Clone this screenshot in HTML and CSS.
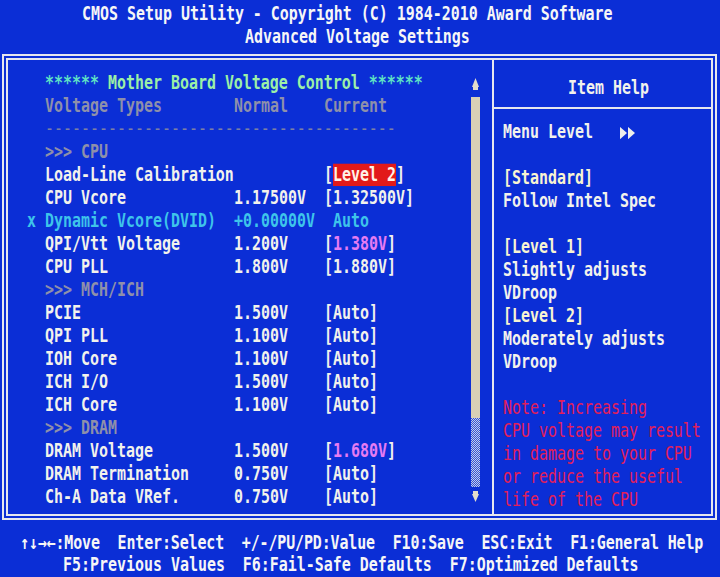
FILE: index.html
```html
<!DOCTYPE html>
<html lang="en">
<head>
<meta charset="utf-8">
<title>CMOS Setup Utility - Advanced Voltage Settings</title>
<link rel="stylesheet" href="styles.css">
</head>
<body>
<div class="screen">
  <header class="title">
    <div class="ln t1">CMOS Setup Utility - Copyright (C) 1984-2010 Award Software</div>
    <div class="ln t2">Advanced Voltage Settings</div>
  </header>

  <main class="frame">
    <section class="menu">
      <div class="rows">
        <div class="ln hdr"><span class="star">******</span> <span class="green">Mother Board Voltage Control</span> <span class="star">******</span></div>
        <div class="ln row muted"><span></span><span>Voltage Types</span><span>Normal</span><span>Current</span></div>
        <div class="ln hdr rule">---------------------------------------</div>
        <div class="ln hdr muted">&gt;&gt;&gt; CPU</div>
        <div class="ln row"><span></span><span>Load-Line Calibration</span><span></span><span>[<span class="sel">Level 2</span>]</span></div>
        <div class="ln row"><span></span><span>CPU Vcore</span><span>1.17500V</span><span>[1.32500V]</span></div>
        <div class="ln row dim"><span>x</span><span>Dynamic Vcore(DVID)</span><span>+0.00000V</span><span> Auto</span></div>
        <div class="ln row"><span></span><span>QPI/Vtt Voltage</span><span>1.200V</span><span>[<span class="pink">1.380V</span>]</span></div>
        <div class="ln row"><span></span><span>CPU PLL</span><span>1.800V</span><span>[1.880V]</span></div>
        <div class="ln hdr muted">&gt;&gt;&gt; MCH/ICH</div>
        <div class="ln row"><span></span><span>PCIE</span><span>1.500V</span><span>[Auto]</span></div>
        <div class="ln row"><span></span><span>QPI PLL</span><span>1.100V</span><span>[Auto]</span></div>
        <div class="ln row"><span></span><span>IOH Core</span><span>1.100V</span><span>[Auto]</span></div>
        <div class="ln row"><span></span><span>ICH I/O</span><span>1.500V</span><span>[Auto]</span></div>
        <div class="ln row"><span></span><span>ICH Core</span><span>1.100V</span><span>[Auto]</span></div>
        <div class="ln hdr muted">&gt;&gt;&gt; DRAM</div>
        <div class="ln row"><span></span><span>DRAM Voltage</span><span>1.500V</span><span>[<span class="pink">1.680V</span>]</span></div>
        <div class="ln row"><span></span><span>DRAM Termination</span><span>0.750V</span><span>[Auto]</span></div>
        <div class="ln row"><span></span><span>Ch-A Data VRef.</span><span>0.750V</span><span>[Auto]</span></div>
      </div>

      <div class="scroll">
        <svg class="arrow up" width="9" height="12" viewBox="0 0 9 12"><polygon points="4.5,0 8,9 1,9"/><rect x="2" y="9" width="5" height="3"/></svg>
        <div class="thumb"></div>
        <div class="dots"></div>
        <svg class="arrow down" width="9" height="11" viewBox="0 0 9 11"><rect x="2" y="0" width="5" height="3"/><polygon points="1,3 8,3 4.5,11"/></svg>
      </div>
    </section>

    <aside class="help">
      <div class="help-head"><div class="ln">Item Help</div></div>
      <div class="help-body">
        <div class="ln">Menu Level   <svg class="fwd" width="17" height="10" viewBox="0 0 17 10"><polygon points="0,0 7,5 0,10"/><polygon points="8,0 15,5 8,10"/></svg></div>
        <div class="ln"> </div>
        <div class="ln opt">[Standard]</div>
        <div class="ln">Follow Intel Spec</div>
        <div class="ln"> </div>
        <div class="ln opt">[Level 1]</div>
        <div class="ln">Slightly adjusts</div>
        <div class="ln">VDroop</div>
        <div class="ln opt">[Level 2]</div>
        <div class="ln">Moderately adjusts</div>
        <div class="ln">VDroop</div>
        <div class="ln"> </div>
        <div class="ln note">Note: Increasing</div>
        <div class="ln note">CPU voltage may result</div>
        <div class="ln note">in damage to your CPU</div>
        <div class="ln note">or reduce the useful</div>
        <div class="ln note">life of the CPU</div>
      </div>
    </aside>
  </main>

  <footer class="keys">
    <div class="ln k1">↑↓→←:Move  Enter:Select  +/-/PU/PD:Value  F10:Save  ESC:Exit  F1:General Help</div>
    <div class="ln k2">F5:Previous Values  F6:Fail-Safe Defaults  F7:Optimized Defaults</div>
  </footer>
</div>
</body>
</html>
```
FILE: styles.css
```css
* {
  box-sizing: border-box;
  margin: 0;
  padding: 0;
}

html,
body {
  background: #0b2ed6;
}

body {
  width: 720px;
  height: 577px;
  overflow: hidden;
  font-family: "DejaVu Sans Mono", "Liberation Mono", monospace;
  font-weight: bold;
  font-size: 14.95px;
  color: #f2f2ec;
}

/* one text-mode line: 23px cell, glyphs stretched tall like the VGA font */
.ln {
  height: 23px;
  line-height: 23px;
  white-space: pre;
  transform: scaleY(1.24);
}

/* ---------- title ---------- */
.title {
  height: 54px;
  padding-top: 3px;
  color: #f6f6f6;
}

.t1 { padding-left: 82px; }
.t2 { padding-left: 245px; }

/* ---------- main double frame ---------- */
.frame {
  margin: 0 3px 0 2px;
  height: 466px;
  border: 6px double #e6e6ee;
  display: grid;
  grid-template-columns: 484px 1fr;
}

.menu {
  display: grid;
  grid-template-columns: 1fr 9px 12px;
}

.rows {
  padding: 12px 0 0 19px;
}

.row {
  display: grid;
  grid-template-columns: 18px 189px 90px auto;
}

.hdr { padding-left: 18px; }

.star { color: #5ee0c4; }
.green { color: #9cf0a6; }
.muted { color: #8e90aa; }
.rule { color: #7a7ea6; font-weight: normal; }
.dim { color: #3ec4ea; }
.pink { color: #e67cf2; }

.sel {
  background: #e21a1a;
  color: #fff2e6;
}

/* ---------- scroll bar ---------- */
.scroll {
  display: flex;
  flex-direction: column;
  align-items: center;
  padding-top: 18px;
}

.arrow { fill: #e2dccc; display: block; }
.up { margin-bottom: 7px; }
.down { margin-top: 4px; }

.thumb {
  width: 9px;
  height: 321px;
  background: #d8d0b6;
}

.dots {
  width: 9px;
  height: 69px;
  background: repeating-conic-gradient(#c9cce6 0 25%, #2f52d8 0 50%) 0 0 / 2px 2px;
}

/* ---------- item help ---------- */
.help {
  border-left: 2px solid #e6e6ee;
}

.help-head {
  height: 49px;
  padding: 17px 0 0 74px;
  border-bottom: 2px solid #e6e6ee;
}

.help-body {
  padding: 12px 0 0 9px;
}

.fwd {
  fill: #eeeeea;
  vertical-align: -1px;
}

.opt { color: #f8f4d2; }
.note { color: #e21e5a; font-weight: normal; }

/* ---------- key legend ---------- */
.keys {
  padding-top: 12px;
  color: #f6f6f6;
}

.keys .ln {
  height: 22px;
  line-height: 22px;
}

.k1 {
  padding-left: 20px;
  letter-spacing: -0.12px;
}

.k2 { padding-left: 63px; }
```
